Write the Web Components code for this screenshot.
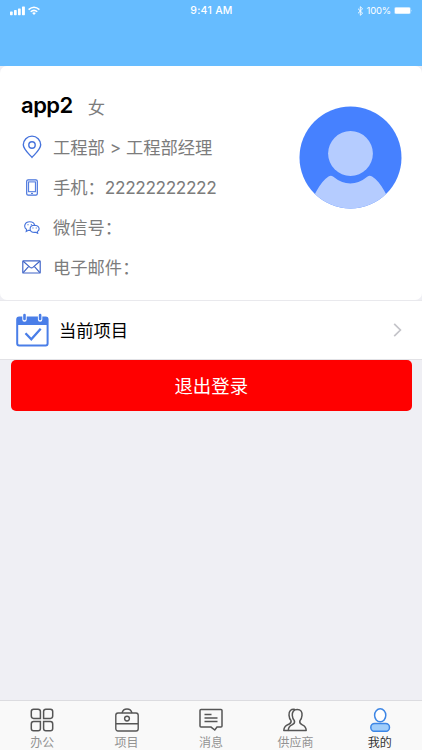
<!DOCTYPE html>
<html lang="zh-CN">
<head>
<meta charset="utf-8">
<meta name="viewport" content="width=device-width, initial-scale=1">
<title>我的</title>
<style>
    html, body { margin: 0; height: 100%; }
    body {
        font-family: Inter, "Noto Sans CJK SC", sans-serif;
        background: #efeff4;
        overflow: hidden;
    }
</style>
</head>
<body>
<app-screen>
    <status-bar slot="header" time="9:41 AM" battery="100%"></status-bar>
    <profile-card name="app2" gender="女">
        <info-row icon="pin">工程部 &gt; 工程部经理</info-row>
        <info-row icon="phone">手机：<span style="letter-spacing:-.4px">22222222222</span></info-row>
        <info-row icon="wechat">微信号：</info-row>
        <info-row icon="mail">电子邮件：</info-row>
    </profile-card>
    <menu-cell>当前项目</menu-cell>
    <logout-button>退出登录</logout-button>
    <tab-bar slot="footer">
        <tab-item icon="grid">办公</tab-item>
        <tab-item icon="case">项目</tab-item>
        <tab-item icon="message">消息</tab-item>
        <tab-item icon="people">供应商</tab-item>
        <tab-item icon="me" active>我的</tab-item>
    </tab-bar>
</app-screen>

<script>
const icons = {
    pin: `<svg width="20" height="24" viewBox="0 0 20 24" fill="none" stroke="#4673dc" stroke-width="1.4">
            <path d="M10 22.400C7 19 1.300 14.300 1.300 9.800a8.700 8.700 0 0 1 17.400 0c0 4.500-5.700 9.200-8.700 12.600z"/>
            <circle cx="10" cy="10" r="3.200"/>
        </svg>`,
    phone: `<svg width="12" height="17" viewBox="0 0 12 17" fill="none" stroke="#4673dc">
            <rect x=".7" y=".9" width="10.600" height="15.200" rx="1.400" stroke-width="1.200"/>
            <rect x="2.600" y="2.900" width="6.800" height="9.800" stroke-width="1"/>
            <path d="M5 14.400h2" stroke-width="1"/>
        </svg>`,
    wechat: `<svg width="16" height="13" viewBox="0 0 16 13" fill="none" stroke="#4673dc" stroke-width="1.100">
            <path d="M6 9.400 4.400 9.300 2.200 10.500 2.600 8.500C-.8 6 .6.800 5.700.800c2.700 0 4.600 1.500 4.900 3.500"/>
            <path d="M10.600 4.300c-6 .2-6 7.100.2 7.100l1-.1 1.900 1-.4-1.700c3.300-2.200 1.700-6.300-2.700-6.300z"/>
            <path d="M3.400 3.800h1.200M6.800 3.800H8M8.400 7h1.100M11.700 7h1.100"/>
        </svg>`,
    mail: `<svg width="19" height="14" viewBox="0 0 19 14" fill="none" stroke="#4065c8" stroke-width="1.200">
            <rect x=".8" y=".8" width="17.400" height="12.200" rx=".6"/>
            <path d="m1.200 1.300 6.900 6.100q1.400 1.100 2.800 0l6.900-6.100M1.200 12.600l5.500-6.200M17.800 12.600l-5.500-6.200"/>
        </svg>`,
    grid: `<svg width="24" height="24" viewBox="0 0 24 24" fill="none" stroke="#555" stroke-width="1.500">
            <path d="M3.600 1.300h4.500q2.300 0 2.300 2.300v6.800H3.600q-2.300 0-2.300-2.300V3.600q0-2.300 2.300-2.300z"/>
            <path d="M15.900 1.300h4.500q2.300 0 2.300 2.300v4.500q0 2.300-2.300 2.300h-6.800V3.600q0-2.300 2.300-2.300z"/>
            <path d="M3.600 13.600h6.800v6.800q0 2.300-2.300 2.300H3.600q-2.300 0-2.300-2.300v-4.500q0-2.300 2.300-2.300z"/>
            <path d="M13.600 13.600h6.800q2.300 0 2.300 2.300v4.500q0 2.300-2.300 2.300h-4.500q-2.300 0-2.300-2.300z"/>
        </svg>`,
    case: `<svg width="24" height="24" viewBox="0 0 24 24" fill="none" stroke="#555" stroke-width="1.400">
            <rect x=".8" y="5" width="22.400" height="18" rx="2.200"/>
            <path d="M7 5C8.500-.300 15.500-.300 17 5M1 15.700h22"/>
            <circle cx="12" cy="10.600" r="2.400"/>
        </svg>`,
    message: `<svg width="24" height="24" viewBox="0 0 24 24" fill="none" stroke="#555" stroke-width="1.500">
            <path d="M2 1.400h20q1 0 1 1v15.700q0 1-1 1h-4L15.800 22 12 19.100H2q-1 0-1-1V2.400q0-1 1-1z"/>
            <path d="M5.500 6.500h7M5.500 10h13M5.500 13.500h13"/>
        </svg>`,
    people: `<svg width="24" height="24" viewBox="0 0 24 24" fill="none" stroke="#555" stroke-width="1.500" stroke-linejoin="round">
            <path d="M14.200 1.500c3.800 0 5.100 2.500 4.800 6-.2 2.600-1.200 4.300-2.100 5.300-.6 2 .4 3.200 2.400 4.100 2.500 1.100 3.800 2 3.900 5.500H5.300c0-3.500 1.200-4.400 3.700-5.500 2.300-1 3-2.200 2.400-4.100-1-1-1.900-2.700-2.100-5.300-.3-3.500 1.300-6 4.900-6z"/>
            <path d="M12 1.500c-4-.7-6.300 1.600-6 5.600.2 2.500 1 4.400 2 5.500.5 1.700-.2 2.700-2.300 3.700C2.800 17.600.9 18.600.8 22.400h4.500"/>
        </svg>`,
    me: `<svg width="24" height="24" viewBox="0 0 24 24" stroke="#3d86e5" stroke-width="1.500">
            <ellipse cx="12.200" cy="7.300" rx="5.600" ry="6.500" fill="#fff"/>
            <rect x="2.800" y="15.500" width="18.700" height="7.800" rx="3.900" fill="#a0cdfa"/>
        </svg>`
};

class BaseElement extends HTMLElement {
    constructor() {
        super()
        this.attachShadow({ mode: 'open' })
    }
    connectedCallback() {
        this.shadowRoot.innerHTML = this.render()
    }
    attr(name) { return this.getAttribute(name) || '' }
}

class AppScreen extends BaseElement {
    render() {
        return `
        <style>
            :host { display: flex; flex-direction: column; height: 750px; background: #efeff4; }
            main { flex: 1; display: flex; flex-direction: column; min-height: 0; }
        </style>
        <slot name="header"></slot>
        <main><slot></slot></main>
        <slot name="footer"></slot>`
    }
}

class StatusBar extends BaseElement {
    render() {
        return `
        <style>
            :host { display: block; height: 66px; background: #66bcff; color: #fff; }
            .bar {
                display: grid; grid-template-columns: 1fr auto 1fr; align-items: center;
                height: 21px; padding: 0 9px 0 10px; font-size: 10.500px; line-height: 21px;
            }
            .left, .right { display: flex; align-items: center; }
            .left { gap: 3px; }
            .right { justify-content: flex-end; gap: 3px; }
            .time { font-weight: 500; letter-spacing: .25px; }
            .battery { font-size: 9.500px; letter-spacing: -.2px; }
            svg { display: block; }
        </style>
        <div class="bar">
            <div class="left">
                <svg width="15" height="10" viewBox="0 0 15 10" fill="#fff">
                    <rect x="0" y="5.600" width="2.700" height="3.600" rx=".6"/>
                    <rect x="4" y="4.100" width="2.700" height="5.100" rx=".6"/>
                    <rect x="8" y="2.400" width="2.700" height="6.800" rx=".6"/>
                    <rect x="12" y=".4" width="2.900" height="8.800" rx=".6"/>
                </svg>
                <svg width="12" height="10" viewBox="0 0 12 10" fill="none" stroke="#fff" stroke-width="1.500">
                    <path d="M.6 3.600q5.400-4.800 10.800 0M2.700 5.800q3.300-2.800 6.600 0"/>
                    <path d="M4.100 7q1.900-1.300 3.800 0L6 9z" fill="#fff" stroke="none"/>
                </svg>
            </div>
            <div class="time">${this.attr('time')}</div>
            <div class="right">
                <svg width="7" height="10" viewBox="0 0 7 10" fill="none" stroke="#fff" stroke-width=".9">
                    <path d="m1 2.700 4.600 4.500L3.300 9.300V.7l2.300 2.100L1 7.300"/>
                </svg>
                <span class="battery">${this.attr('battery')}</span>
                <svg width="19" height="8" viewBox="0 0 19 8">
                    <rect x=".3" y=".1" width="16.400" height="7" rx="1.500" fill="#fff" fill-opacity=".5"/>
                    <rect x="1" y=".8" width="15" height="5.600" rx=".8" fill="#fff"/>
                    <path d="M17.500 2.400q1.200 1.200 0 2.400z" fill="#fff" fill-opacity=".7"/>
                </svg>
            </div>
        </div>`
    }
}

class ProfileCard extends BaseElement {
    render() {
        return `
        <style>
            :host {
                display: flex; justify-content: space-between; box-sizing: border-box;
                height: 234px; padding: 21px 20px 0 21px;
                background: #fff; border-radius: 7px;
            }
            .title { display: flex; align-items: center; height: 40px; gap: 15px; }
            .name { font-size: 22px; font-weight: 600; letter-spacing: -.5px; line-height: 36px; padding-bottom: 4px; color: #000; }
            .gender { font-size: 17.300px; line-height: 36px; padding-top: 2px; color: #7c7c7c; }
            .avatar { display: block; margin-top: 19px; }
        </style>
        <div>
            <div class="title">
                <span class="name">${this.attr('name')}</span>
                <span class="gender">${this.attr('gender')}</span>
            </div>
            <slot></slot>
        </div>
        <svg class="avatar" width="103" height="103" viewBox="0 0 103 103">
            <clipPath id="round"><circle cx="51.500" cy="51.500" r="51"/></clipPath>
            <g clip-path="url(#round)">
                <rect width="103" height="103" fill="#4681ff"/>
                <circle cx="51.500" cy="47.500" r="22.400" fill="#b5ccff"/>
                <path d="M10 103C13 92 21 76 29.500 70.500q2.500-1.500 4.500 0 17.300 14 34.600 0 2-1.500 4.500 0C82 76 90 92 93 103z" fill="#b5ccff"/>
            </g>
        </svg>`
    }
}

class InfoRow extends BaseElement {
    render() {
        return `
        <style>
            :host {
                display: flex; align-items: center; height: 40px; gap: 11px;
                font-size: 17.300px; line-height: 38px; color: #7c7c7c; white-space: nowrap;
            }
            .icon { display: flex; justify-content: center; width: 21px; }
            .text { padding-top: 2px; }
        </style>
        <span class="icon">${icons[this.attr('icon')]}</span>
        <span class="text"><slot></slot></span>`
    }
}

class MenuCell extends BaseElement {
    render() {
        return `
        <style>
            :host {
                display: flex; align-items: center; box-sizing: border-box;
                height: 60px; padding: 0 20px 0 16px;
                background: #fff; border-top: 1px solid #e9e9ed; border-bottom: 1px solid #e2e2e6;
                font-size: 17.300px; color: #000;
            }
            .label { flex: 1; padding: 2px 0 0 10px; line-height: 30px; }
        </style>
        <svg width="33" height="34" viewBox="0 0 33 34">
            <rect x="1.200" y="4.500" width="30.400" height="28.100" rx="2" fill="#fff" stroke="#4a7ee8" stroke-width="2"/>
            <path d="M1 12V6q0-2 2-2h27q2 0 2 2v6z" fill="#4a7ee8"/>
            <path d="M8.500 2v4.500M24.100 2v4.500" stroke="#fff" stroke-width="4.400" stroke-linecap="round"/>
            <path d="M8.500 2v4M24.100 2v4" stroke="#4a7ee8" stroke-width="2.600" stroke-linecap="round"/>
            <path d="m9.500 20.200 5.800 6 9.400-10.400" fill="none" stroke="#4a7ee8" stroke-width="2.300"/>
        </svg>
        <span class="label"><slot></slot></span>
        <svg width="9" height="14" viewBox="0 0 9 14" fill="none" stroke="#c4c4c9" stroke-width="1.700">
            <path d="m1.200.9 6.200 6.100-6.200 6.100"/>
        </svg>`
    }
}

class LogoutButton extends BaseElement {
    render() {
        return `
        <style>
            :host { display: block; padding: 0 10px 0 10.500px; }
            button {
                display: block; width: 100%; height: 51px; padding: 2px 0 0; border: 0; border-radius: 5px;
                background: #f00; color: #fff; font: inherit; font-size: 18.400px; line-height: 49px;
            }
        </style>
        <button><slot></slot></button>`
    }
}

class TabBar extends BaseElement {
    render() {
        return `
        <style>
            :host {
                display: flex; box-sizing: border-box; height: 50px;
                background: #f9f9f9; border-top: 1px solid #dcdce0;
            }
        </style>
        <slot></slot>`
    }
}

class TabItem extends BaseElement {
    render() {
        return `
        <style>
            :host {
                flex: 1; display: flex; flex-direction: column; align-items: center;
                padding-top: 7px; font-size: 12px; line-height: 18px; color: #929292;
            }
            :host([active]) { color: #333; }
            svg { display: block; flex: none; }
            .label { margin-top: 2px; }
        </style>
        ${icons[this.attr('icon')]}
        <span class="label"><slot></slot></span>`
    }
}

customElements.define('app-screen', AppScreen);
customElements.define('status-bar', StatusBar);
customElements.define('profile-card', ProfileCard);
customElements.define('info-row', InfoRow);
customElements.define('menu-cell', MenuCell);
customElements.define('logout-button', LogoutButton);
customElements.define('tab-bar', TabBar);
customElements.define('tab-item', TabItem);
</script>
</body>
</html>
